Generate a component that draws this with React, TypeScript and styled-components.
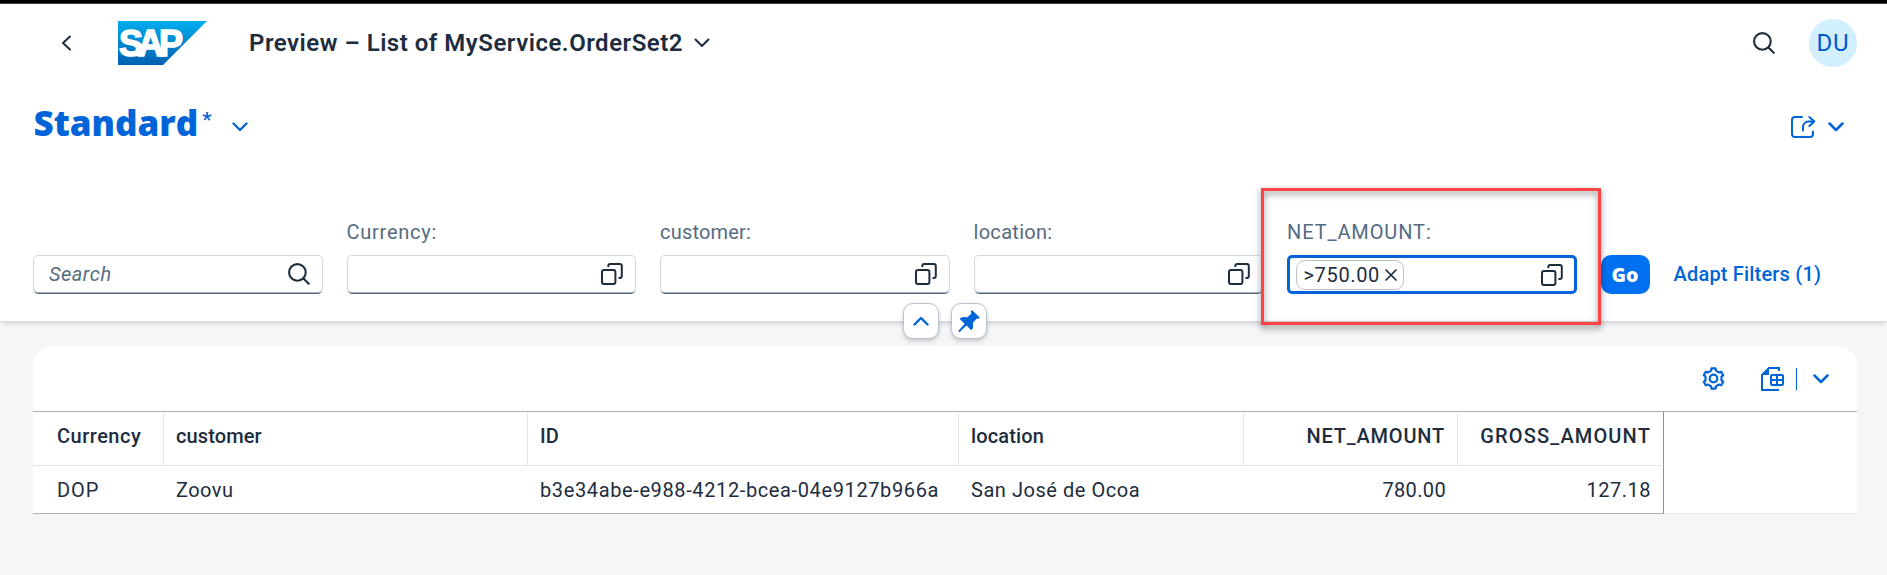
import React from "react";
import styled, { createGlobalStyle, css } from "styled-components";

const color = {
  text: "#1d2d3e",
  label: "#556b82",
  link: "#0064d9",
  page: "#f5f6f7",
  strong: "#a8b3bd",
  light: "#e5e5e5",
};

const Global = createGlobalStyle`
  * { box-sizing: border-box; }
  body { margin: 0; background: ${color.page}; font-family: Roboto, "Liberation Sans", sans-serif; font-size: 20px; color: ${color.text}; }
  svg { display: block; flex: none; }
`;

const Page = styled.div`
  height: 575px;
  overflow: hidden;
  display: flex;
  flex-direction: column;
`;

const TopStrip = styled.div`
  height: 4px;
  flex: none;
  background: #000;
  border-bottom: 1px solid #3c3c3c;
`;

const Spaced = css<{ $ls?: number }>`
  letter-spacing: ${(p) => p.$ls ?? 0}px;
  white-space: pre;
`;

const ShellBar = styled.header`
  display: flex;
  align-items: center;
  height: 78px;
  flex: none;
  padding: 0 30px 0 61px;
  background: #fff;
`;

const ShellTitle = styled.h1<{ $ls?: number }>`
  ${Spaced}
  margin: 0 11px 0 42px;
  font-size: 24px;
  line-height: 30px;
  font-weight: 600;
`;

const Logo = styled.svg`
  margin-left: 46px;
  overflow: visible;
`;

const Spacer = styled.div`
  flex: 1;
`;

const Avatar = styled.div`
  width: 48px;
  height: 48px;
  margin-left: 34px;
  border-radius: 50%;
  background: #d1efff;
  color: #0057d2;
  font-size: 24px;
  line-height: 48px;
  letter-spacing: 0.8px;
  text-align: center;
`;

const VariantBar = styled.div`
  display: flex;
  align-items: center;
  height: 88px;
  flex: none;
  padding: 1px 43px 0 33px;
  background: #fff;
  color: ${color.link};
`;

const VariantName = styled.h2`
  margin: 0 0 8px 0.5px;
  font-family: "Open Sans", sans-serif;
  font-size: 35px;
  font-weight: 800;
  line-height: 44px;
`;

const Dirty = styled.span`
  align-self: flex-start;
  margin: 22px 20.5px 0 4px;
  font-size: 21px;
  font-weight: 500;
  line-height: 30px;
`;

const ShareArrow = styled.span`
  margin-left: 12px;
`;

const FilterBar = styled.section`
  position: relative;
  display: flex;
  align-items: flex-end;
  height: 152px;
  flex: none;
  padding: 0 0 27px 33px;
  background: #fff;
  border-bottom: 1px solid #d5d7d9;
  box-shadow: 0 4px 4px -2px rgba(34, 53, 72, 0.14);
`;

const Field = styled.div`
  width: 289.5px;
  margin-right: 24px;
  flex: none;
`;

const Label = styled.div<{ $ls?: number }>`
  ${Spaced}
  height: 35px;
  line-height: 24px;
  color: ${color.label};
`;

const Input = styled.div<{ $focus?: boolean }>`
  display: flex;
  align-items: center;
  justify-content: space-between;
  height: 39px;
  border-radius: 5px;
  background: #fff;
  ${(p) =>
    p.$focus
      ? css`
          border: 3px solid ${color.link};
          padding: 0 10.5px 0 6px;
        `
      : css`
          border: 1px solid #d3d9df;
          border-bottom-color: #556b82;
          box-shadow: inset 0 -1px 0 #a3b0bd;
          padding: 0 12px 1px 15px;
        `}
`;

const Placeholder = styled.span<{ $ls?: number }>`
  ${Spaced}
  font-style: italic;
  color: ${color.label};
`;

const Token = styled.span<{ $ls?: number }>`
  ${Spaced}
  display: flex;
  align-items: center;
  gap: 5px;
  height: 30px;
  padding: 0 6.5px;
  border: 1px solid #bcc3ca;
  border-radius: 9px;
`;

const GoButton = styled.button`
  width: 49px;
  height: 39px;
  padding: 0;
  border: 0;
  border-radius: 10px;
  background: #0070f2;
  color: #fff;
  font: 800 19.5px "Open Sans", sans-serif;
`;

const AdaptLink = styled.a<{ $ls?: number }>`
  ${Spaced}
  margin-left: 24px;
  line-height: 39px;
  font-weight: 500;
  color: ${color.link};
`;

const Handles = styled.div`
  position: absolute;
  left: 903px;
  bottom: -18px;
  display: flex;
  gap: 12.5px;
`;

const Handle = styled.button`
  display: flex;
  align-items: center;
  justify-content: center;
  width: 35.5px;
  height: 36px;
  padding: 0;
  border: 1px solid #bcc3ca;
  border-radius: 10px;
  background: #fff;
  color: ${color.link};
  box-shadow: 0 2px 4px rgba(34, 53, 72, 0.25);
`;

const Highlight = styled.div`
  position: absolute;
  left: 1261px;
  top: 18px;
  width: 340px;
  height: 137px;
  border: 3px solid #fd4343;
  filter: drop-shadow(0 3px 3px rgba(0, 0, 0, 0.5));
`;

const Card = styled.main`
  margin: 24px 30px 0 33px;
  border-radius: 20px 20px 0 0;
  background: #fff;
`;

const Toolbar = styled.div`
  display: flex;
  align-items: center;
  justify-content: flex-end;
  height: 65px;
  padding-right: 28px;
  color: ${color.link};
`;

const Divider = styled.i`
  width: 1px;
  height: 22px;
  margin: 0 16px 0 12px;
  background: ${color.link};
`;

const Gap = styled.span`
  width: 36px;
`;

const Grid = styled.div`
  display: grid;
  grid-template-columns: 130.5px 364px 431px 285px 214.5px 206px 1fr;
  border-top: 1px solid ${color.strong};
`;

const Cell = styled.div<{ $ls?: number; $first?: boolean; $num?: boolean; $last?: boolean }>`
  ${Spaced}
  height: 48px;
  line-height: 48px;
  padding: 0 12px 0 ${(p) => (p.$first ? 24 : 12.5)}px;
  text-align: ${(p) => (p.$num ? "right" : "left")};
  border-bottom: 1px solid ${color.strong};
  ${(p) => p.$last && "border-right: 1px solid #8b8f94;"}
`;

const HeadCell = styled(Cell)`
  height: 54px;
  line-height: 49px;
  font-weight: 500;
  border-bottom-color: ${color.light};
  border-right: 1px solid ${(p) => (p.$last ? "#8b8f94" : color.light)};
`;

const Filler = styled.div<{ $line?: boolean }>`
  ${(p) => p.$line && `border-bottom: 1px solid ${color.light};`}
`;

const Chevron = ({ d, w, h, s = 2 }: { d: string; w: number; h: number; s?: number }) => (
  <svg width={w} height={h} fill="none" stroke="currentColor" strokeWidth={s} strokeLinecap="round" strokeLinejoin="round">
    <path d={d} />
  </svg>
);
const Down = ({ s }: { s?: number }) => <Chevron w={16} h={10} d="M1.5 1.5 8 8 14.5 1.5" s={s} />;

const SearchIcon = () => (
  <svg width="22" height="22" fill="none" stroke={color.text} strokeWidth="2.100" strokeLinecap="round">
    <circle cx="9.4" cy="9.4" r="8.3" />
    <path d="m15.5 15.5 5.2 5.2" />
  </svg>
);

const ValueHelpIcon = () => (
  <svg width="22" height="22" fill="none" stroke={color.text} strokeWidth="2" strokeLinecap="round">
    <rect x="1" y="7" width="13.4" height="14" rx="2" />
    <path d="M7.3 3.2V3a2 2 0 0 1 2-2H18.8a2 2 0 0 1 2 2V13a2 2 0 0 1-2 2h-.6" />
  </svg>
);

const ShareIcon = () => (
  <svg width="25" height="24" viewBox="0 0 25 24" fill="none" stroke="currentColor" strokeWidth="2" strokeLinecap="round" strokeLinejoin="round">
    <path d="M11 2H4a3 3 0 0 0-3 3v14a3 3 0 0 0 3 3h15a3 3 0 0 0 3-3v-2.5" />
    <path d="M12 15.5V12a5.5 5.5 0 0 1 5.5-5.5H23M18.3 2l5 4.5-5 4.5" />
  </svg>
);

const PinIcon = () => (
  <svg width="22" height="22" viewBox="0 0 22 22" fill="currentColor">
    <path d="M13.2.6q.6-.6 1.2 0l6.9 6.5q.6.7-.1 1.1-1.3.7-2.7.5l-3.8 4.2q1.2 3.8-.8 6.8-.5.6-1.1 0L8.5 15.5 2 21.7q-.7.5-1.3 0t0-1.3l6-6.6L2 9.3q-.6-.6.1-1 3.3-1.9 6.9-.9l4.3-3.6q-.5-1.7-.1-3.2Z" />
  </svg>
);

const gear = (() => {
  const pts: string[] = [];
  for (let i = 0; i < 6; i++) {
    const a = (i * Math.PI) / 3 - Math.PI / 2;
    [[-0.2, 10.3], [0.2, 10.3], [0.3, 8.2], [0.747, 8.2]].forEach(([o, r]) =>
      pts.push(`${(11.5 + r * Math.cos(a + o)).toFixed(2)} ${(11.5 + r * Math.sin(a + o)).toFixed(2)}`),
    );
  }
  return `M${pts.join("L")}Z`;
})();

const GearIcon = () => (
  <svg width="23" height="23" fill="none" stroke="currentColor" strokeWidth="2.200" strokeLinejoin="round">
    <path d={gear} />
    <circle cx="11.5" cy="11.5" r="3.8" />
  </svg>
);

const ExportIcon = () => (
  <svg width="23" height="24" fill="none" stroke="currentColor" strokeWidth="2">
    <path d="M18 4V1H8L1 8v15h17" />
    <path d="M8 1v7H1z" fill="currentColor" stroke="none" />
    <rect x="10" y="8" width="12" height="10" rx="1" />
    <path d="M16 8v10M10 13h12" />
  </svg>
);

const filters = [
  { label: "Currency:", ls: 0.75 },
  { label: "customer:", ls: 0.2 },
  { label: "location:", ls: 0.3 },
];

const columns = [
  { head: "Currency", hs: 0.5, value: "DOP", vs: 0.9 },
  { head: "customer", hs: 0.1, value: "Zoovu", vs: 0.45 },
  { head: "ID", hs: 0.2, value: "b3e34abe-e988-4212-bcea-04e9127b966a", vs: 0.62 },
  { head: "location", hs: 0.15, value: "San José de Ocoa", vs: 0.55 },
  { head: "NET_AMOUNT", hs: 0.8, value: "780.00", vs: 0.35, num: true },
  { head: "GROSS_AMOUNT", hs: 1.15, value: "127.18", vs: 0.5, num: true, last: true },
];

export default function App() {
  return (
    <Page>
      <Global />
      <TopStrip />
      <ShellBar>
        <Chevron w={11} h={16} d="M9 1.5 2 8 9 14.5" />
        <Logo width="89" height="44" viewBox="0 0 89 44">
          <defs>
            <linearGradient id="sap" x1="0" y1="0" x2="0" y2="1">
              <stop offset="0" stopColor="#00aeef" />
              <stop offset="0.5" stopColor="#0086cd" />
              <stop offset="1" stopColor="#0060b2" />
            </linearGradient>
          </defs>
          <path d="M0 0H89L45 44H0Z" fill="url(#sap)" />
          <text x="0" y="35" fill="#fff" fontFamily="Liberation Sans, sans-serif" fontWeight="700" fontSize="36" stroke="#fff" strokeWidth="1.6">
            <tspan x="1">S</tspan>
            <tspan x="19.500">A</tspan>
            <tspan x="41">P</tspan>
          </text>
        </Logo>
        <ShellTitle $ls={0.5}>Preview – List of MyService.OrderSet2</ShellTitle>
        <Down />
        <Spacer />
        <SearchIcon />
        <Avatar>DU</Avatar>
      </ShellBar>
      <VariantBar>
        <VariantName>Standard</VariantName>
        <Dirty>*</Dirty>
        <Down s={2.3} />
        <Spacer />
        <ShareIcon />
        <ShareArrow>
          <Down s={2.5} />
        </ShareArrow>
      </VariantBar>
      <FilterBar>
        <Field>
          <Input>
            <Placeholder $ls={0.5}>Search</Placeholder>
            <SearchIcon />
          </Input>
        </Field>
        {filters.map((f) => (
          <Field key={f.label}>
            <Label $ls={f.ls}>{f.label}</Label>
            <Input>
              <span />
              <ValueHelpIcon />
            </Input>
          </Field>
        ))}
        <Field>
          <Label $ls={0.9}>NET_AMOUNT:</Label>
          <Input $focus>
            <Token $ls={0.65}>
              {">750.00"}
              <Chevron w={12} h={12} d="M1 1l10 10M11 1L1 11" s={1.7} />
            </Token>
            <ValueHelpIcon />
          </Input>
        </Field>
        <GoButton>Go</GoButton>
        <AdaptLink $ls={0.19}>Adapt Filters (1)</AdaptLink>
        <Handles>
          <Handle>
            <Chevron w={16} h={10} d="M1.5 8.5 8 2l6.5 6.5" s={2.4} />
          </Handle>
          <Handle>
            <PinIcon />
          </Handle>
        </Handles>
        <Highlight />
      </FilterBar>
      <Card>
        <Toolbar>
          <GearIcon />
          <Gap />
          <ExportIcon />
          <Divider />
          <Down s={2.5} />
        </Toolbar>
        <Grid>
          {columns.map((c, i) => (
            <HeadCell key={c.head} $ls={c.hs} $first={i === 0} $num={c.num} $last={c.last}>
              {c.head}
            </HeadCell>
          ))}
          <Filler />
          {columns.map((c, i) => (
            <Cell key={c.head} $ls={c.vs} $first={i === 0} $num={c.num} $last={c.last}>
              {c.value}
            </Cell>
          ))}
          <Filler $line />
        </Grid>
      </Card>
    </Page>
  );
}
